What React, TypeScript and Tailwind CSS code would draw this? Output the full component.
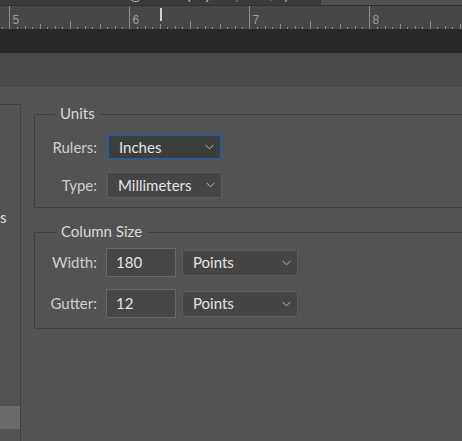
import React from "react";

const FONT = { fontFamily: "Lato, 'Noto Sans', sans-serif" };

function Ruler() {
  const ticks: React.ReactNode[] = [];
  for (let i = -2; i < 64; i++) {
    const x = 9.5 + i * 7.5;
    const m = ((i % 16) + 16) % 16;
    if (m === 0) continue;
    let h = 2;
    if (m === 8) h = 8;
    else if (m % 4 === 0) h = 5;
    else if (m % 2 === 0) h = 3;
    ticks.push(
      <line key={i} x1={Math.round(x) + 0.5} x2={Math.round(x) + 0.5} y1={23 - h} y2={23} stroke="#8c8c8c" strokeWidth="1" />
    );
  }
  const majors = [
    { x: 9.5, n: "5" },
    { x: 129.5, n: "6" },
    { x: 249.5, n: "7" },
    { x: 369.5, n: "8" },
  ];
  return (
    <svg width="462" height="23" className="block">
      {ticks}
      {majors.map((m) => (
        <g key={m.n}>
          <line x1={m.x} x2={m.x} y1={0} y2={23} stroke="#8c8c8c" strokeWidth="1" />
          <text x={m.x + 3} y={18} fill="#9c9c9c" fontSize="12" fontFamily="'Liberation Sans', sans-serif">
            {m.n}
          </text>
        </g>
      ))}
      <rect x="160" y="2" width="2" height="13" fill="#d2d2d2" />
    </svg>
  );
}

function Chevron() {
  return (
    <svg width="9" height="6" viewBox="0 0 9 6" className="block">
      <path d="M0.5 0.8 L4.5 4.8 L8.5 0.8" fill="none" stroke="#b5b5b5" strokeWidth="1" />
    </svg>
  );
}

function Select({ value, w, focused }: { value: string; w: string; focused?: boolean }) {
  return (
    <div
      className={
        "flex h-[26px] items-center justify-between rounded-[2px] pl-[10px] pr-[6px] text-[15px] text-[#e4e4e4] " +
        w +
        (focused ? " border-2 border-[#2f5c8e] bg-[#3d3d3d] pl-[9px]" : " border border-[#5c5c5c] bg-[#454545]")
      }
    >
      <span>{value}</span>
      <Chevron />
    </div>
  );
}

function Input({ value }: { value: string }) {
  return (
    <div className="flex h-[29px] w-[70px] items-center border border-[#676767] bg-[#464646] pl-[9px] text-[15px] text-[#e4e4e4]">
      {value}
    </div>
  );
}

function Label({ children }: { children: React.ReactNode }) {
  return <div className="w-[62px] text-right text-[15px] text-[#cfcfcf]">{children}</div>;
}

function Group({ title, legendLeft, children, className }: { title: string; legendLeft: string; children: React.ReactNode; className?: string }) {
  return (
    <div className={"relative w-[440px] border border-[#3f3f3f] " + (className ?? "")}>
      <div className={"absolute top-[-12px] bg-[#535353] px-[5px] text-[15px] leading-[20px] text-[#d8d8d8] " + legendLeft}>
        {title}
      </div>
      {children}
    </div>
  );
}

export default function App() {
  return (
    <div className="h-[441px] w-[462px] overflow-hidden bg-[#535353]" style={FONT}>
      {/* top tab strip */}
      <div className="flex h-[6px] border-b border-[#303030]">
        <div className="relative w-[321px] overflow-hidden bg-[#3b3b3b]">
          <div className="absolute left-[62px] top-[-13px] whitespace-nowrap text-[14px] leading-[16px] text-[#bdbdbd]">
            Untitled-1 @ 66.7% (Layer 1, RGB/8)
          </div>
        </div>
        <div className="flex-1 bg-[#4f4f4f]" />
      </div>
      {/* ruler */}
      <div className="h-[23px] bg-[#474747]">
        <Ruler />
      </div>
      {/* dark band */}
      <div className="h-[24px] bg-[#282828]" />
      {/* header band */}
      <div className="h-[34px] bg-[#4a4a4a]" />

      {/* dialog body */}
      <div className="flex">
        <div className="mt-[17px] flex h-[400px] w-[21px] shrink-0 flex-col border-r border-t border-[#404040]">
          <div className="mt-[102px] text-[15px] leading-[20px] text-[#e2e2e2]">s</div>
          <div className="mt-[179px] h-[23px] w-[20px] bg-[#6b6b6b]" />
        </div>

        <div className="pl-[13px] pt-[27px]">
          <Group title="Units" legendLeft="left-[20px]" className="pb-[9px] pt-[19px]">
            <div className="flex flex-col gap-[12px]">
              <div className="flex items-center gap-[10px]">
                <Label>Rulers:</Label>
                <Select value="Inches" w="w-[115px]" focused />
              </div>
              <div className="flex items-center gap-[10px]">
                <Label>Type:</Label>
                <Select value="Millimeters" w="w-[115px]" />
              </div>
            </div>
          </Group>

          <Group title="Column Size" legendLeft="left-[21px]" className="mt-[24px] pb-[10px] pt-[15px]">
            <div className="flex flex-col gap-[12px]">
              <div className="flex items-center gap-[9px]">
                <Label>Width:</Label>
                <Input value="180" />
                <div className="ml-[-3px]">
                  <Select value="Points" w="w-[116px]" />
                </div>
              </div>
              <div className="flex items-center gap-[9px]">
                <Label>Gutter:</Label>
                <Input value="12" />
                <div className="ml-[-3px]">
                  <Select value="Points" w="w-[116px]" />
                </div>
              </div>
            </div>
          </Group>
        </div>
      </div>
    </div>
  );
}
